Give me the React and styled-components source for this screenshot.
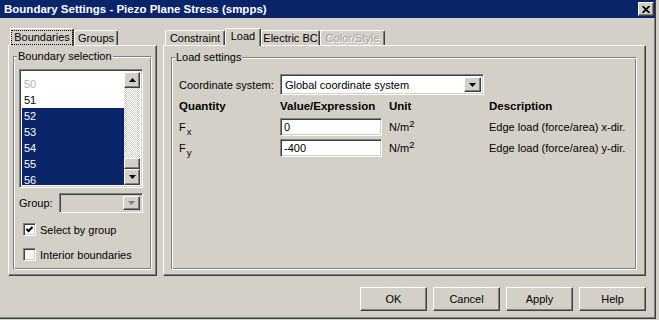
import React from 'react';
import styled, { createGlobalStyle, css } from 'styled-components';

const Global = createGlobalStyle`
  html, body { margin: 0; padding: 0; background: #d4d0c8; }
  body {
    font-family: "Liberation Sans", Arial, sans-serif;
    font-size: 11px;
    color: #000;
  }
  * { box-sizing: border-box; }
`;

const raised = css`
  background: #d4d0c8;
  border: 1px solid;
  border-color: #fff #404040 #404040 #fff;
  box-shadow: inset -1px -1px 0 #808080;
`;

const sunken = css`
  border: 1px solid;
  border-color: #808080 #fff #fff #808080;
  box-shadow: inset 1px 1px 0 #404040, inset -1px -1px 0 #d4d0c8;
`;

const Window = styled.div`
  width: 656px;
  height: 319px;
  background: #d4d0c8;
  border-right: 1px solid #404040;
  border-bottom: 1px solid #404040;
  box-shadow: inset -1px -1px 0 #808080;
  display: flex;
  flex-direction: column;
`;

const TitleBar = styled.div`
  height: 18px;
  flex: none;
  background: #0a246a;
  display: flex;
  align-items: center;
  justify-content: space-between;
  padding: 0 1px 0 4px;
`;

const TitleText = styled.span`
  color: #fff;
  font-weight: bold;
  font-size: 11.5px;
  white-space: nowrap;
`;

const CloseButton = styled.div`
  ${raised};
  width: 16px;
  height: 14px;
  display: flex;
  align-items: center;
  justify-content: center;
`;

const Body = styled.div`
  height: 258px;
  flex: none;
  display: flex;
  gap: 6px;
  padding: 10px 9px 0 8px;
`;

const Pane = styled.div`
  width: ${p => p.$w}px;
  display: flex;
  flex-direction: column;
`;

const TabRow = styled.div`
  height: 17px;
  display: flex;
  align-items: flex-end;
  padding-left: 2px;
`;

const Tab = styled.div`
  width: ${p => p.$w}px;
  height: ${p => (p.$active ? 18 : 15)}px;
  margin-bottom: ${p => (p.$active ? -1 : 0)}px;
  position: relative;
  z-index: ${p => (p.$active ? 1 : 0)};
  background: #d4d0c8;
  border-top: 1px solid #fff;
  border-left: 1px solid #fff;
  border-right: 1px solid #404040;
  box-shadow: inset -1px 0 0 #808080;
  border-radius: 2px 2px 0 0;
  display: flex;
  align-items: ${p => (p.$active ? 'flex-start' : 'center')};
  padding-top: ${p => (p.$active ? 1 : 0)}px;
  justify-content: center;
  white-space: nowrap;
  color: ${p => (p.$disabled ? '#a0a0a0' : '#000')};
  text-shadow: ${p => (p.$disabled ? '1px 1px 0 #fff' : 'none')};
`;

const Focus = styled.span`
  outline: 1px dotted #000;
  outline-offset: -1px;
  padding: 1px 3px;
  line-height: 13px;
`;

const Panel = styled.div`
  flex: 1;
  display: flex;
  flex-direction: column;
  ${raised};
  padding: ${p => p.$pad};
`;

const Group = styled.fieldset`
  flex: 1;
  margin: 0;
  padding: 0;
  min-width: 0;
  border: 1px solid;
  border-color: #808080 #fff #fff #808080;
  box-shadow: inset 1px 1px 0 #fff, inset -1px -1px 0 #808080;
`;

const Legend = styled.legend`
  margin-left: 3px;
  padding: 0 1px;
  line-height: 13px;
  background: #d4d0c8;
`;

const LeftContent = styled.div`
  padding: 6px 8px 0 5px;
  display: flex;
  flex-direction: column;
`;

const ListBox = styled.div`
  ${sunken};
  height: 119px;
  background: #fff;
  display: flex;
  padding: 2px;
`;

const Items = styled.div`
  flex: 1;
  overflow: hidden;
  padding-top: 4px;
`;

const Item = styled.div`
  height: 16px;
  line-height: 16px;
  padding-left: 2px;
  background: ${p => (p.$sel ? '#0a246a' : 'transparent')};
  color: ${p => (p.$sel ? '#fff' : p.$dim ? '#b0b0b0' : '#000')};
`;

const ScrollBar = styled.div`
  width: 16px;
  display: flex;
  flex-direction: column;
`;

const ScrollBtn = styled.div`
  ${raised};
  height: ${p => p.$h || 16}px;
  flex: none;
  display: flex;
  align-items: center;
  justify-content: center;
`;

const Track = styled.div`
  flex: 1;
  background: repeating-conic-gradient(#d4d0c8 0 25%, #fff 0 50%) 0 0 / 2px 2px;
`;

const FieldRow = styled.div`
  display: flex;
  align-items: center;
  margin-top: ${p => p.$mt}px;
  gap: ${p => p.$gap || 0}px;
`;

const Combo = styled.div`
  ${sunken};
  width: ${p => p.$w}px;
  height: ${p => p.$h}px;
  background: ${p => (p.$disabled ? '#d4d0c8' : '#fff')};
  display: flex;
  align-items: center;
  padding: 2px;
`;

const ComboText = styled.span`
  flex: 1;
  padding-left: 2px;
  white-space: nowrap;
`;

const DropBtn = styled.div`
  ${raised};
  width: 17px;
  align-self: stretch;
  display: flex;
  align-items: center;
  justify-content: center;
`;

const CheckRow = styled.label`
  display: flex;
  align-items: center;
  gap: 4px;
  margin: ${p => p.$mt}px 0 0 4px;
  height: 13px;
`;

const CheckBox = styled.span`
  ${sunken};
  width: 13px;
  height: 13px;
  background: ${p => (p.$dim ? '#f4f4f2' : '#fff')};
  display: flex;
  align-items: center;
  justify-content: center;
`;

const RightContent = styled.div`
  padding: 10px 8px 0 7px;
  display: grid;
  grid-template-columns: 101px 109px 100px 1fr;
  grid-template-rows: 21px 21px 21px 21px;
  align-items: center;
`;

const Cell = styled.div`
  grid-column: ${p => p.$span || 'auto'};
  white-space: nowrap;
  font-weight: ${p => (p.$bold ? 'bold' : 'normal')};
  font-size: ${p => (p.$bold ? '11.5px' : '11px')};
`;

const TextBox = styled.input`
  ${sunken};
  width: 102px;
  height: 18px;
  background: #fff;
  font: 11px "Liberation Sans", Arial, sans-serif;
  color: #000;
  padding: 0 3px;
  margin: 0;
  outline: none;
`;

const Sub = styled.sub`
  font-size: 9.5px;
  vertical-align: -4px;
  line-height: 0;
  margin-left: 1px;
`;

const Sup = styled.sup`
  font-size: 9.5px;
  vertical-align: 4px;
  line-height: 0;
`;

const ButtonRow = styled.div`
  display: flex;
  justify-content: flex-end;
  gap: 6px;
  padding-right: 9px;
  margin-top: 11px;
`;

const Button = styled.button`
  ${raised};
  width: 67px;
  height: 24px;
  font: 11px "Liberation Sans", Arial, sans-serif;
  color: #000;
  padding: 0;
`;

const ArrowDown = ({ color = '#000' }) => (
  <svg width="7" height="4" viewBox="0 0 7 4"><path d="M0 0H7L3.5 4Z" fill={color} /></svg>
);
const ArrowUp = () => (
  <svg width="7" height="4" viewBox="0 0 7 4"><path d="M0 4H7L3.5 0Z" fill="#000" /></svg>
);

const items = [
  { n: '50', dim: true },
  { n: '51' },
  { n: '52', sel: true },
  { n: '53', sel: true },
  { n: '54', sel: true },
  { n: '55', sel: true },
  { n: '56', sel: true },
];

export default function App() {
  return (
    <>
      <Global />
      <Window>
        <TitleBar>
          <TitleText>Boundary Settings - Piezo Plane Stress (smpps)</TitleText>
          <CloseButton>
            <svg width="8" height="7" viewBox="0 0 8 7">
              <path d="M0.5 0L7.5 7M7.5 0L0.5 7" stroke="#000" strokeWidth="1.8" />
            </svg>
          </CloseButton>
        </TitleBar>
        <Body>
          <Pane $w={149}>
            <TabRow>
              <Tab $active $w={64}><Focus>Boundaries</Focus></Tab>
              <Tab $w={44}>Groups</Tab>
            </TabRow>
            <Panel $pad="4px 4px 5px 4px">
              <Group>
                <Legend>Boundary selection</Legend>
                <LeftContent>
                  <ListBox>
                    <Items>
                      {items.map(it => (
                        <Item key={it.n} $sel={it.sel} $dim={it.dim}>{it.n}</Item>
                      ))}
                    </Items>
                    <ScrollBar>
                      <ScrollBtn><ArrowUp /></ScrollBtn>
                      <Track />
                      <ScrollBtn $h={11} />
                      <ScrollBtn><ArrowDown /></ScrollBtn>
                    </ScrollBar>
                  </ListBox>
                  <FieldRow $mt={5} $gap={6}>
                    <span>Group:</span>
                    <Combo $w={84} $h={20} $disabled>
                      <ComboText />
                      <DropBtn><ArrowDown color="#808080" /></DropBtn>
                    </Combo>
                  </FieldRow>
                  <CheckRow $mt={10}>
                    <CheckBox>
                      <svg width="7" height="7" viewBox="0 0 7 7">
                        <path d="M0.5 3L2.5 5L6.5 1" stroke="#000" strokeWidth="2" fill="none" />
                      </svg>
                    </CheckBox>
                    <span>Select by group</span>
                  </CheckRow>
                  <CheckRow $mt={12}>
                    <CheckBox $dim />
                    <span>Interior boundaries</span>
                  </CheckRow>
                </LeftContent>
              </Group>
            </Panel>
          </Pane>
          <Pane $w={483}>
            <TabRow>
              <Tab $w={60}>Constraint</Tab>
              <Tab $active $w={36}>Load</Tab>
              <Tab $w={59}>Electric BC</Tab>
              <Tab $w={65} $disabled>Color/Style</Tab>
            </TabRow>
            <Panel $pad="5px 8px 5px 7px">
              <Group>
                <Legend>Load settings</Legend>
                <RightContent>
                  <Cell>Coordinate system:</Cell>
                  <Cell $span="2 / 5">
                    <Combo $w={204} $h={21}>
                      <ComboText>Global coordinate system</ComboText>
                      <DropBtn><ArrowDown /></DropBtn>
                    </Combo>
                  </Cell>
                  <Cell $bold>Quantity</Cell>
                  <Cell $bold>Value/Expression</Cell>
                  <Cell $bold>Unit</Cell>
                  <Cell $bold>Description</Cell>
                  <Cell>F<Sub>x</Sub></Cell>
                  <Cell><TextBox readOnly value="0" /></Cell>
                  <Cell>N/m<Sup>2</Sup></Cell>
                  <Cell>Edge load (force/area) x-dir.</Cell>
                  <Cell>F<Sub>y</Sub></Cell>
                  <Cell><TextBox readOnly value="-400" /></Cell>
                  <Cell>N/m<Sup>2</Sup></Cell>
                  <Cell>Edge load (force/area) y-dir.</Cell>
                </RightContent>
              </Group>
            </Panel>
          </Pane>
        </Body>
        <ButtonRow>
          <Button>OK</Button>
          <Button>Cancel</Button>
          <Button>Apply</Button>
          <Button>Help</Button>
        </ButtonRow>
      </Window>
    </>
  );
}
